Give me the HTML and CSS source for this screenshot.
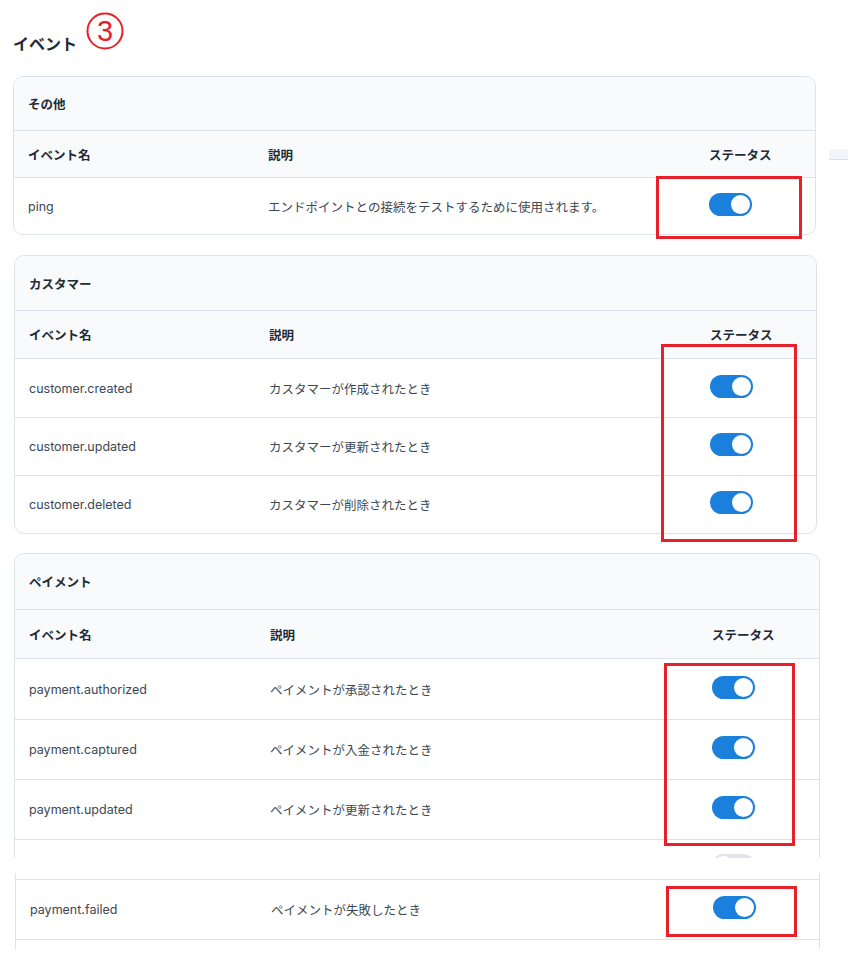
FILE: index.html
```html
<!DOCTYPE html>
<html lang="ja">
<head>
    <meta charset="UTF-8">
    <meta name="viewport" content="width=device-width, initial-scale=1.0">
    <title>イベント</title>
    <link rel="stylesheet" href="styles.css">
</head>
<body>
    <div class="page">
        <!-- Heading with step marker -->
        <div class="heading">
            <h1>イベント</h1>
            <svg class="step" width="40" height="40" viewBox="0 0 40 40">
                <circle cx="20" cy="20" r="17.5" fill="none" stroke="#e8202a" stroke-width="2"/>
                <text x="20" y="30" text-anchor="middle" font-size="29" fill="#e8202a" font-family="Liberation Sans, Arial, sans-serif">3</text>
            </svg>
        </div>

        <!-- その他 -->
        <div class="card card-other">
            <div class="card-title">その他</div>
            <div class="row head">
                <div>イベント名</div>
                <div>説明</div>
                <div>ステータス</div>
            </div>
            <div class="row">
                <div>ping</div>
                <div>エンドポイントとの接続をテストするために使用されます。</div>
                <div><span class="toggle on"></span></div>
            </div>
        </div>

        <!-- カスタマー -->
        <div class="card card-customer">
            <div class="card-title">カスタマー</div>
            <div class="row head">
                <div>イベント名</div>
                <div>説明</div>
                <div>ステータス</div>
            </div>
            <div class="row">
                <div>customer.created</div>
                <div>カスタマーが作成されたとき</div>
                <div><span class="toggle on"></span></div>
            </div>
            <div class="row">
                <div>customer.updated</div>
                <div>カスタマーが更新されたとき</div>
                <div><span class="toggle on"></span></div>
            </div>
            <div class="row">
                <div>customer.deleted</div>
                <div>カスタマーが削除されたとき</div>
                <div><span class="toggle on"></span></div>
            </div>
        </div>

        <!-- ペイメント -->
        <div class="card card-payment cut">
            <div class="card-title">ペイメント</div>
            <div class="row head">
                <div>イベント名</div>
                <div>説明</div>
                <div>ステータス</div>
            </div>
            <div class="row">
                <div>payment.authorized</div>
                <div>ペイメントが承認されたとき</div>
                <div><span class="toggle on"></span></div>
            </div>
            <div class="row">
                <div>payment.captured</div>
                <div>ペイメントが入金されたとき</div>
                <div><span class="toggle on"></span></div>
            </div>
            <div class="row">
                <div>payment.updated</div>
                <div>ペイメントが更新されたとき</div>
                <div><span class="toggle on"></span></div>
            </div>
            <div class="row partial">
                <div></div>
                <div></div>
                <div><span class="toggle"></span></div>
            </div>
        </div>

        <!-- continued slice -->
        <div class="slice">
            <div class="slice-top"></div>
            <div class="row">
                <div>payment.failed</div>
                <div>ペイメントが失敗したとき</div>
                <div><span class="toggle on"></span></div>
            </div>
            <div class="slice-bottom"></div>
        </div>

        <!-- annotations -->
        <div class="mark mark-1"></div>
        <div class="mark mark-2"></div>
        <div class="mark mark-3"></div>
        <div class="mark mark-4"></div>
        <div class="side-bar"></div>
    </div>
</body>
</html>
```

FILE: styles.css
```css
/* General Styling */
body {
    margin: 0;
    padding: 0;
    background: #fff;
    font-family: "Inter", "Noto Sans CJK JP", sans-serif;
    color: #3d4753;
}

.page {
    position: relative;
    width: 848px;
    min-height: 973px;
}

/* Heading */
.heading {
    display: flex;
    align-items: flex-start;
    height: 76px;
    padding-left: 13px;
    box-sizing: border-box;
}

.heading h1 {
    margin: 32px 0 0;
    font-size: 16px;
    line-height: 24px;
    font-weight: 700;
    color: #1f2a37;
}

.step {
    margin: 11px 0 0 8px;
}

/* Cards */
.card {
    --title-h: 53px;
    --head-h: 47px;
    --row-h: 56px;
    --pad: 14px;
    --col1: 240px;
    --col2: 441px;
    border: 1px solid #dde3ea;
    border-radius: 10px;
    overflow: hidden;
    box-sizing: border-box;
}

.card-other {
    margin-left: 13px;
    width: 803px;
}

.card-customer {
    --title-h: 54px;
    --head-h: 48px;
    --row-h: 58px;
    margin: 20px 0 0 14px;
    width: 803px;
}

.card-payment {
    --title-h: 55px;
    --head-h: 49px;
    --row-h: 60px;
    --col1: 241px;
    --col2: 442px;
    margin: 19px 0 0 14px;
    width: 806px;
}

.card.cut {
    border-bottom: none;
    border-radius: 10px 10px 0 0;
}

.card-title {
    height: var(--title-h);
    display: flex;
    align-items: center;
    padding-left: var(--pad);
    background: #f8fafb;
    border-bottom: 1px solid #dde3ea;
    font-size: 12.5px;
    font-weight: 700;
    color: #1f2a37;
}

/* Rows */
.row {
    display: grid;
    grid-template-columns: var(--col1) var(--col2) 1fr;
    align-items: center;
    height: var(--row-h);
    padding-left: var(--pad);
    border-top: 1px solid #dde3ea;
    font-size: 12.5px;
    box-sizing: border-box;
}

.card-title + .row {
    border-top: none;
}

.row.head {
    height: var(--head-h);
    background: #f8fafb;
    font-weight: 700;
    color: #1f2a37;
    border-bottom: 1px solid #dde3ea;
}

.row.head + .row {
    border-top: none;
}

.row.partial {
    height: 19px;
    align-items: start;
    padding-top: 14px;
    overflow: hidden;
}

/* Toggle */
.toggle {
    position: relative;
    display: block;
    width: 43px;
    height: 23px;
    margin-bottom: 4px;
    border-radius: 12px;
    background: #dfe5ec;
}

.toggle::after {
    content: "";
    position: absolute;
    top: 2px;
    left: 2px;
    width: 19px;
    height: 19px;
    border-radius: 50%;
    background: #fff;
}

.toggle.on {
    background: #1b7fdc;
}

.toggle.on::after {
    left: 22px;
}

/* Continued slice */
.slice {
    --pad: 14px;
    --col1: 241px;
    --col2: 442px;
    --row-h: 61px;
    margin: 15px 0 0 15px;
    width: 805px;
    border-left: 1px solid #dde3ea;
    border-right: 1px solid #dde3ea;
    box-sizing: border-box;
}

.slice-top {
    height: 6px;
}

.slice .row {
    border-bottom: 1px solid #dde3ea;
}

.slice-bottom {
    height: 9px;
}

/* Annotations */
.mark {
    position: absolute;
    border: 3px solid #e8202a;
    box-sizing: border-box;
}

.mark-1 { left: 656px; top: 176px; width: 146px; height: 63px; }
.mark-2 { left: 661px; top: 344px; width: 136px; height: 198px; }
.mark-3 { left: 664px; top: 663px; width: 131px; height: 183px; }
.mark-4 { left: 666px; top: 886px; width: 131px; height: 51px; }

.side-bar {
    position: absolute;
    left: 829px;
    top: 149px;
    width: 19px;
    height: 10px;
    background: #f1f4f8;
    border-bottom: 1px solid #d9dfe7;
}
```
